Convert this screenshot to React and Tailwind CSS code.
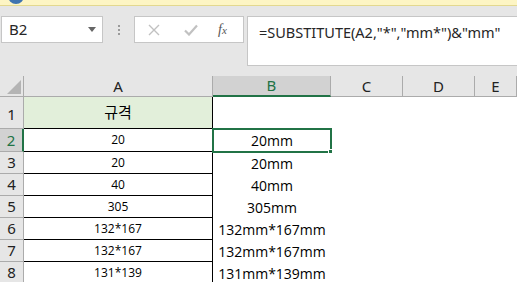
import React from "react"

const cols = [
  { key: "A", w: "w-[189px]" },
  { key: "B", w: "w-[118px]" },
  { key: "C", w: "w-[72px]" },
  { key: "D", w: "w-[72px]" },
  { key: "E", w: "flex-1" },
]

const rows = [
  ["20", "20mm"],
  ["20", "20mm"],
  ["40", "40mm"],
  ["305", "305mm"],
  ["132*167", "132mm*167mm"],
  ["132*167", "132mm*167mm"],
  ["131*139", "131mm*139mm"],
]

function Toolbar() {
  return (
    <div className="flex h-[70px] items-start gap-0 bg-[#e6e6e6] pt-[10px]">
      <div className="ml-px flex h-[27px] w-[102px] items-center justify-between border border-[#c6c6c6] bg-white pl-[7px] pr-[6px]">
        <span className="text-[15px] text-[#262626]">B2</span>
        <svg width="8" height="5" viewBox="0 0 8 5">
          <path d="M0 0H8L4 5Z" fill="#666" />
        </svg>
      </div>
      <div className="flex h-[27px] w-[31px] flex-col items-center justify-center gap-[2px]">
        <span className="h-[2px] w-[2px] bg-[#9a9a9a]" />
        <span className="h-[2px] w-[2px] bg-[#9a9a9a]" />
        <span className="h-[2px] w-[2px] bg-[#9a9a9a]" />
      </div>
      <div className="flex h-[27px] w-[110px] items-center border border-[#c6c6c6] bg-white">
        <svg className="ml-[13px]" width="12" height="12" viewBox="0 0 12 12">
          <path d="M1 1L11 11M11 1L1 11" stroke="#c1c1c1" strokeWidth="1.4" />
        </svg>
        <svg className="ml-[24px]" width="14" height="12" viewBox="0 0 14 12">
          <path d="M1 6.5L5 10.5L13 1.5" stroke="#c1c1c1" strokeWidth="2.2" fill="none" />
        </svg>
        <span className="ml-[20px] font-['Liberation_Serif',serif] text-[14px] italic text-[#555]">
          f<span className="text-[11px]">x</span>
        </span>
      </div>
      <div className="ml-[3px] flex h-[50px] flex-1 items-start border-y border-l border-[#c6c6c6] bg-white pl-[11px] pt-[5px]">
        <span className="text-[14.5px] text-[#262626]">=SUBSTITUTE(A2,"*","mm*")&amp;"mm"</span>
      </div>
    </div>
  )
}

function Sheet() {
  return (
    <div className="relative flex flex-col bg-white">
      {/* column headers */}
      <div className="flex h-[21px] bg-[#e6e6e6]">
        <div className="relative w-[24px] border-b border-r border-[#ababab]">
          <svg className="absolute left-[7px] top-[4px]" width="14" height="14" viewBox="0 0 14 14">
            <path d="M14 0V14H0Z" fill="#b4b4b4" />
          </svg>
        </div>
        {cols.map((c) =>
          c.key === "B" ? (
            <div
              key={c.key}
              className={`${c.w} flex items-center justify-center border-b-2 border-r border-b-[#217346] border-r-[#ababab] bg-[#d2d2d2] text-[15px] text-[#217346]`}
            >
              {c.key}
            </div>
          ) : (
            <div
              key={c.key}
              className={`${c.w} flex items-center justify-center border-b border-r border-[#ababab] text-[15px] text-[#222]`}
            >
              {c.key}
            </div>
          )
        )}
      </div>
      {/* row 1 */}
      <div className="flex h-[32px]">
        <div className="flex w-[24px] items-end justify-center border-b border-r border-[#ababab] bg-[#e6e6e6] pb-[3px] text-[15px] text-[#222]">
          1
        </div>
        <div className="flex w-[189px] items-center justify-center border-b border-r border-black bg-[#e2efda] font-['Noto_Sans_CJK_KR',sans-serif] text-[15px] text-black">
          규격
        </div>
        <div className="w-[118px]" />
        <div className="flex-1" />
      </div>
      {rows.map((r, i) => {
        const sel = i === 0
        return (
          <div key={i} className={`flex ${sel ? "h-[23px]" : "h-[22px]"}`}>
            {sel ? (
              <div className="flex w-[24px] items-center justify-center border-b border-r-2 border-b-[#ababab] border-r-[#217346] bg-[#d2d2d2] text-[15px] text-[#217346]">
                {i + 2}
              </div>
            ) : (
              <div className="flex w-[24px] items-center justify-center border-b border-r border-[#ababab] bg-[#e6e6e6] text-[15px] text-[#222]">
                {i + 2}
              </div>
            )}
            <div className="flex w-[189px] items-center justify-center border-b border-r border-black font-['Open_Sans',sans-serif] text-[12px] text-black">
              {r[0]}
            </div>
            <div className="flex w-[118px] items-center justify-center font-['Open_Sans',sans-serif] text-[14px] text-black">
              {r[1]}
            </div>
            <div className="flex-1" />
          </div>
        )
      })}
      {/* selection */}
      <div className="pointer-events-none absolute left-[212px] top-[52px] h-[25px] w-[120px] border-2 border-[#217346]" />
      <div className="pointer-events-none absolute left-[328px] top-[73px] h-[5px] w-[5px] border border-white bg-[#217346]" />
    </div>
  )
}

export default function App() {
  return (
    <div className="relative h-[282px] w-[517px] overflow-hidden bg-white font-['Noto_Sans',sans-serif]">
      <div className="h-[6px] border-b border-[#e3d88f] bg-[#fdf5c4]" />
      <div className="absolute left-[8px] top-[-12px] h-[16px] w-[16px] rounded-full bg-[#3f74b0]" />
      <Toolbar />
      <Sheet />
    </div>
  )
}
